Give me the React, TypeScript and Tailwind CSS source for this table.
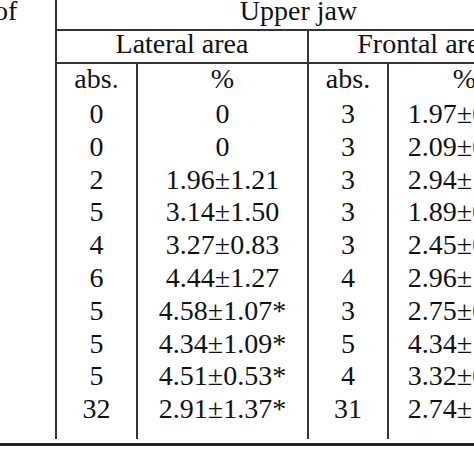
const rows = [
  { a1: '0', p1: '0', a2: '3', p2: '1.97±0.62' },
  { a1: '0', p1: '0', a2: '3', p2: '2.09±0.71' },
  { a1: '2', p1: '1.96±1.21', a2: '3', p2: '2.94±1.12' },
  { a1: '5', p1: '3.14±1.50', a2: '3', p2: '1.89±0.45' },
  { a1: '4', p1: '3.27±0.83', a2: '3', p2: '2.45±0.93' },
  { a1: '6', p1: '4.44±1.27', a2: '4', p2: '2.96±1.04' },
  { a1: '5', p1: '4.58±1.07*', a2: '3', p2: '2.75±0.88' },
  { a1: '5', p1: '4.34±1.09*', a2: '5', p2: '4.34±1.31' },
  { a1: '5', p1: '4.51±0.53*', a2: '4', p2: '3.32±0.97' },
  { a1: '32', p1: '2.91±1.37*', a2: '31', p2: '2.74±1.15' },
];

const line = 'border-[#333]';

export default function App() {
  return (
    <div
      className="w-[474px] h-[474px] overflow-hidden bg-white text-[#111] text-[28px] leading-[21px]"
      style={{ fontFamily: '"Liberation Serif", "Times New Roman", serif' }}
    >
      <div className="grid w-max grid-cols-[55px_81px_171px_80px_153px_120px] text-center">
        {/* top header */}
        <div className="h-[31px] text-left">
          <span className="ml-[-6px] whitespace-nowrap">of</span>
        </div>
        <div className={`col-span-4 h-[31px] border-l-2 border-b-2 ${line}`}>Upper jaw</div>
        <div className={`h-[31px] border-l-2 border-b-2 ${line}`} />

        {/* area header */}
        <div className="h-[33px]" />
        <div className={`col-span-2 h-[33px] pt-[2px] border-l-2 border-b-2 ${line}`}>Lateral area</div>
        <div className={`col-span-2 h-[33px] pt-[2px] border-l-2 border-b-2 ${line} whitespace-nowrap`}>Frontal area</div>
        <div className={`h-[33px] border-l-2 border-b-2 ${line}`} />

        {/* abs / % header */}
        <div className="h-[34px]" />
        <div className={`h-[34px] pt-[4px] border-l-2 ${line}`}>abs.</div>
        <div className={`h-[34px] pt-[4px] border-l-2 ${line}`}>%</div>
        <div className={`h-[34px] pt-[4px] border-l-2 ${line}`}>abs.</div>
        <div className={`h-[34px] pt-[4px] border-l-2 ${line}`}>%</div>
        <div className={`h-[34px] border-l-2 ${line}`} />

        {rows.map((r, i) => (
          <div key={i} className="contents">
            <div className="h-[32.8px]" />
            <div className={`h-[32.8px] pt-[5px] border-l-2 ${line}`}>{r.a1}</div>
            <div className={`h-[32.8px] pt-[5px] border-l-2 ${line} whitespace-nowrap`}>{r.p1}</div>
            <div className={`h-[32.8px] pt-[5px] border-l-2 ${line}`}>{r.a2}</div>
            <div className={`h-[32.8px] pt-[5px] border-l-2 ${line} whitespace-nowrap`}>{r.p2}</div>
            <div className={`h-[32.8px] border-l-2 ${line}`} />
          </div>
        ))}

        {/* spacer under last row */}
        <div className="h-[13px]" />
        <div className={`h-[13px] border-l-2 ${line}`} />
        <div className={`h-[13px] border-l-2 ${line}`} />
        <div className={`h-[13px] border-l-2 ${line}`} />
        <div className={`h-[13px] border-l-2 ${line}`} />
        <div className={`h-[13px] border-l-2 ${line}`} />
      </div>
      <div className="mt-[4px] h-[3px] w-full bg-[#222]" />
    </div>
  );
}
